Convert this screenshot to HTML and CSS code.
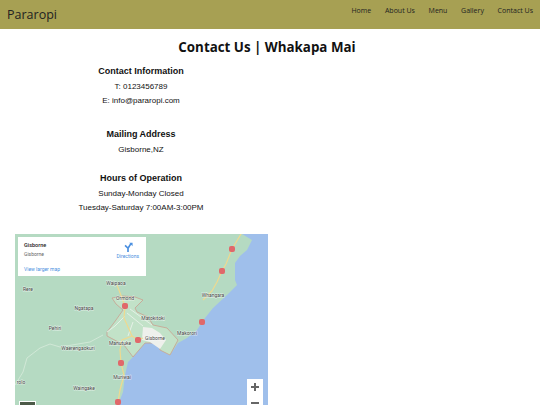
FILE: index.html
```html
<!DOCTYPE html>
<html lang="en">
<head>
  <meta charset="UTF-8">
  <title>Contact Us | Pararopi</title>
  <link rel="stylesheet" href="styles.css">
</head>
<body>
  <header class="topbar">
    <a class="brand" href="#">Pararopi</a>
    <nav class="nav">
      <a href="#">Home</a>
      <a href="#">About Us</a>
      <a href="#">Menu</a>
      <a href="#">Gallery</a>
      <a href="#">Contact Us</a>
    </nav>
  </header>

  <h1 class="title">Contact Us | Whakapa Mai</h1>

  <section class="info">
    <h2>Contact Information</h2>
    <p>T: 0123456789</p>
    <p>E: info@pararopi.com</p>
    <h2 class="mail">Mailing Address</h2>
    <p>Gisborne,NZ</p>
    <h2 class="hours">Hours of Operation</h2>
    <p>Sunday-Monday Closed</p>
    <p>Tuesday-Saturday 7:00AM-3:00PM</p>
  </section>

  <div class="map">
    <svg class="map-art" width="253" height="171" viewBox="15 234 253 171">
      <rect x="15" y="234" width="253" height="171" fill="#b5dac2"/>
      <path class="sea" d="M242 234 L252 240 L247 250 L240 256 L235 263 L235 280 L237 285 L227 295 L213 308 L205 318 L197 330 L187 338 L178 343 L170 355 L160 350 L158 343 L145 343 L133 357 L128 362 L125 375 L123 392 L118 405 L268 405 L268 234 Z"/>
      <path class="border" d="M112 298 L123 296 L135 297 L143 300 L135 308 L137 312 L148 317 L153 325 L167 328 L178 340 L170 355 L160 350 L158 343 L145 343 L133 357 L124 345 L107 336 L107 332 L116 320 L123 310 L116 304 Z"/>
      <path class="town" d="M143 327 L152 328 L160 333 L166 340 L160 349 L150 342 L142 340 Z"/>
      <path class="street" d="M127 313 L143 326 M130 309 L152 325 M125 316 L115 326 L107 332 M133 322 L128 336"/>
      <path class="road" d="M241 234 L232 249 L226 264 L222 271 L217 282 L212 291 L203 300"/>
      <path class="road" d="M117 285 L125 306 L124 318 L132 336 L122 340 L120 350 L121 363 L124 375 L120 390 L118 402"/>
      <path class="road" d="M132 336 L138 340 L143 338"/>
      <path class="river" d="M15 385 L23 372 L27 358 L40 348 L50 344 L60 347 L90 342 L103 335"/>
      <g class="pin">
        <rect x="122" y="303" width="6" height="6" rx="2"/>
        <rect x="229" y="246" width="6" height="6" rx="2"/>
        <rect x="219" y="268" width="6" height="6" rx="2"/>
        <rect x="199" y="319" width="6" height="6" rx="2"/>
        <rect x="135" y="337" width="6" height="6" rx="2"/>
        <rect x="118" y="360" width="6" height="6" rx="2"/>
        <rect x="115" y="399" width="6" height="6" rx="2"/>
      </g>
      <g class="labels">
        <text x="116" y="285">Waipaoa</text>
        <text x="125" y="300">Ormond</text>
        <text x="28" y="291">Rere</text>
        <text x="84" y="310">Ngatapa</text>
        <text x="55" y="330">Pehiri</text>
        <text x="213" y="297">Whangara</text>
        <text x="153" y="320">Matokitoki</text>
        <text x="155" y="340">Gisborne</text>
        <text x="187" y="335">Makorori</text>
        <text x="120" y="345">Manutuke</text>
        <text x="78" y="350">Waerengaokuri</text>
        <text x="122" y="379">Muriwai</text>
        <text x="84" y="390">Waingake</text>
        <text x="21" y="384">rolo</text>
      </g>
    </svg>
    <div class="place">
      <div class="place-left">
        <div class="place-name">Gisborne</div>
        <div class="place-sub">Gisborne</div>
        <a class="place-link" href="#">View larger map</a>
      </div>
      <a class="directions" href="#">
        <svg width="10" height="10" viewBox="0 0 12 12"><path d="M6 12V7.500L2.500 4M6 7.500L9.500 2" fill="none" stroke="#4a8fe0" stroke-width="2"/><path d="M7.500 1H11.500V5Z" fill="#4a8fe0"/></svg>
        <span>Directions</span>
      </a>
    </div>
    <div class="zoom">
      <div class="zoom-btn zoom-in"></div>
      <div class="zoom-btn"></div>
    </div>
    <div class="thumb"></div>
  </div>
</body>
</html>
```

FILE: styles.css
```css
* {
  box-sizing: border-box;
}
html, body {
  height: 405px;
  overflow: hidden;
}
body {
  margin: 0;
  background: #fff;
  color: #111;
  font-family: "Liberation Sans", Arial, sans-serif;
}
a {
  text-decoration: none;
  color: inherit;
}

.topbar {
  height: 29px;
  background: #a7a053;
  display: flex;
  justify-content: space-between;
  padding: 0 7px;
  font-family: "Open Sans", sans-serif;
  color: #222;
}
.brand {
  font-size: 12.500px;
  line-height: 30px;
}
.nav {
  display: flex;
  gap: 13.700px;
  font-size: 7px;
  line-height: 22px;
}

.title {
  margin: 8px 6px 0 0;
  height: 20px;
  text-align: center;
  font: 700 13.350px/20px "Open Sans", sans-serif;
}

.info {
  width: 282px;
  margin-top: 7px;
  text-align: center;
  font-size: 8px;
  line-height: 14px;
}
.info h2 {
  margin: 0;
  font-size: 9px;
  line-height: 14px;
}
.info p {
  margin: 0;
}
.info h2 + p {
  margin-top: 2px;
}
.info .mail {
  margin-top: 19px;
}
.info .hours {
  margin-top: 14px;
}

.map {
  position: relative;
  width: 253px;
  height: 171px;
  margin: 19px 0 0 15px;
  overflow: hidden;
  background: #b5dac2;
}
.map-art {
  display: block;
}
.sea {
  fill: #9fbfeb;
}
.road {
  fill: none;
  stroke: #efd98f;
  stroke-width: 1.200;
}
.border {
  fill: #c2e2c8;
  stroke: #c9a08f;
  stroke-width: 0.800;
}
.town {
  fill: #eef0ec;
}
.street {
  fill: none;
  stroke: #eef4ee;
  stroke-width: 0.800;
}
.river {
  fill: none;
  stroke: #d8ebdc;
  stroke-width: 0.800;
}
.pin rect {
  fill: #e0686a;
}
.labels text {
  font: 5px "Roboto", sans-serif;
  fill: #444;
  text-anchor: middle;
  paint-order: stroke;
  stroke: rgba(255, 255, 255, 0.6);
  stroke-width: 1px;
}

.place {
  position: absolute;
  top: 3px;
  left: 3px;
  width: 128px;
  height: 39px;
  background: #fff;
  display: flex;
  justify-content: space-between;
  padding: 5px 7px 0 6px;
  font-family: "Roboto", sans-serif;
}
.place-name {
  font-size: 5.500px;
  font-weight: 500;
  line-height: 7px;
  color: #222;
}
.place-sub {
  font-size: 5px;
  line-height: 7px;
  margin-top: 2px;
  color: #666;
}
.place-link {
  display: block;
  font-size: 5px;
  line-height: 7px;
  margin-top: 8px;
  color: #4a8fe0;
}
.directions {
  display: flex;
  flex-direction: column;
  align-items: center;
  gap: 1px;
  font-size: 5px;
  line-height: 6px;
  color: #4a8fe0;
}

.zoom {
  position: absolute;
  top: 145px;
  right: 5px;
  width: 16px;
  height: 32px;
  background: #fff;
}
.zoom-btn {
  position: relative;
  height: 16px;
}
.zoom-btn::before {
  content: "";
  position: absolute;
  top: 7px;
  left: 4px;
  width: 8px;
  height: 2px;
  background: #666;
}
.zoom-in::after {
  content: "";
  position: absolute;
  top: 4px;
  left: 7px;
  width: 2px;
  height: 8px;
  background: #666;
}
.thumb {
  position: absolute;
  left: 4px;
  bottom: -8px;
  width: 17px;
  height: 12px;
  background: #4c5a48;
  border: 1px solid #fff;
}
```
